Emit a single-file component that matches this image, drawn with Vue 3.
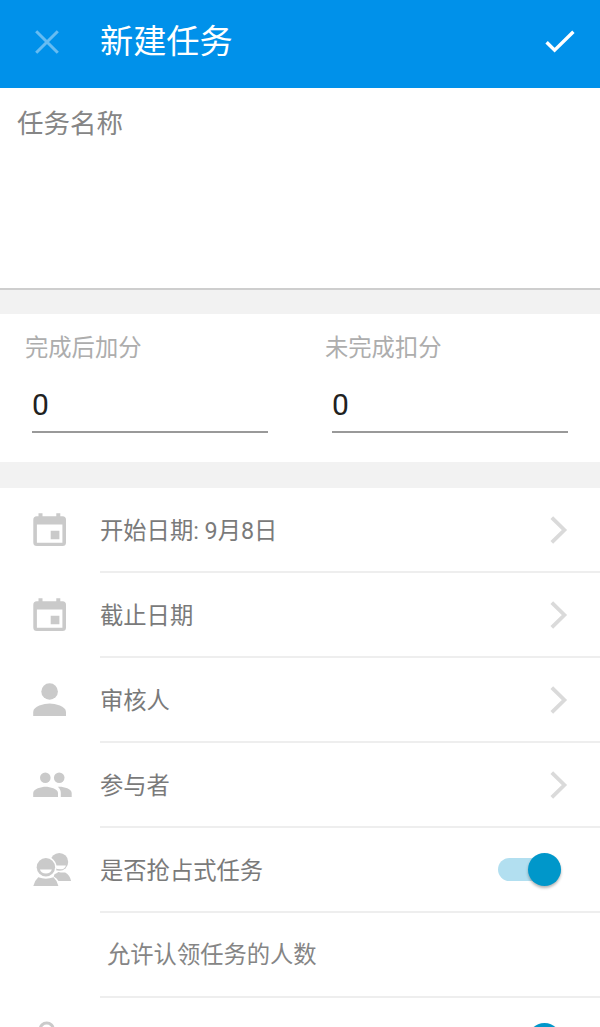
<script setup>
import { ref } from 'vue'

const bonus = ref(0)
const penalty = ref(0)
const grab = ref(true)
const notify = ref(true)

const links = [
  { icon: 'calendar', label: '开始日期: 9月8日' },
  { icon: 'calendar', label: '截止日期' },
  { icon: 'person', label: '审核人' },
  { icon: 'people', label: '参与者' },
]
</script>

<template>
  <div class="page">
    <header class="bar">
      <svg class="bar-close" viewBox="0 0 24 24"><path d="M1.2 1.2 22.8 22.8M22.8 1.2 1.2 22.8" /></svg>
      <h1 class="bar-title">新建任务</h1>
      <svg class="bar-ok" viewBox="0 0 30 24"><path d="M1.6 12.2 9.6 20.2 28.4 1.8" /></svg>
    </header>

    <section class="name">任务名称</section>

    <section class="scores">
      <div class="score">
        <div class="score-label">完成后加分</div>
        <div class="score-value">{{ bonus }}</div>
      </div>
      <div class="score">
        <div class="score-label">未完成扣分</div>
        <div class="score-value">{{ penalty }}</div>
      </div>
    </section>

    <section class="list">
      <div v-for="item in links" :key="item.label" class="row">
        <svg class="row-icon" viewBox="0 0 40 34">
          <path
            v-if="item.icon === 'calendar'"
            fill-rule="evenodd"
            d="M5.5 0.3h4v3h13.800v-3h4v3h2.200a3.500 3.500 0 0 1 3.500 3.500v22.700a3.500 3.500 0 0 1-3.500 3.500h-25.700a3.500 3.500 0 0 1-3.500-3.500v-22.700a3.500 3.500 0 0 1 3.500-3.500h1.700zM3.900 11.600v18.200h25.500v-18.200zM17.700 17.800h8.700v8.500h-8.700z"
          />
          <template v-else-if="item.icon === 'person'">
            <circle cx="16.600" cy="8.500" r="8.300" />
            <path d="M0.200 33v-4.100c0-5.500 10.900-8.300 16.400-8.300s16.400 2.800 16.400 8.300v4.100z" />
          </template>
          <template v-else>
            <circle cx="12.300" cy="9.700" r="5.300" />
            <circle cx="26.200" cy="9.700" r="5.300" />
            <path d="M0.200 29v-4.100c0-4.100 8.200-6.200 12.400-6.200s12.400 2.100 12.400 6.200v4.100z" />
            <path d="M26.500 18.700c4.600 0 12.200 2.200 12.200 6.200v4.100h-10.900v-4.100c0-2.600-1.200-4.600-3-6.100.6-.1 1.200-.1 1.700-.1z" />
          </template>
        </svg>
        <div class="row-body">
          <span class="label">{{ item.label }}</span>
          <svg class="chevron" viewBox="0 0 17 28"><path d="M1.800 1.600 14.400 14 1.800 26.400" /></svg>
        </div>
      </div>

      <div class="row">
        <svg class="row-icon" viewBox="0 0 40 34">
          <circle cx="26.300" cy="8.900" r="8.900" />
          <path class="smile" d="M22 12.400h11q-1.400 3.900-5.500 3.900-3.500 0-5.500-1.500z" />
          <path d="M21.500 21.200q3.200-1.400 3.700-2.200 4 .8 7 .4 4.800 2.600 5.900 8.600h-12.600q-1.500-3-4.800-4.600z" />
          <circle class="gap" cx="12.900" cy="14.200" r="10.700" />
          <circle cx="12.900" cy="14.200" r="9.200" />
          <path class="smile" d="M6.900 16.500h12q-1.300 4-6 4t-6-4z" />
          <path d="M5.300 24.300q7.600 2.900 15.200 0 3.800 3.400 4.900 8.700h-25.100q1.200-5.300 5-8.700z" />
        </svg>
        <div class="row-body">
          <span class="label">是否抢占式任务</span>
          <span class="switch" :class="{ on: grab }" @click="grab = !grab"><i class="knob" /></span>
        </div>
      </div>

      <div class="row row--sub">
        <div class="row-body"><span class="label">允许认领任务的人数</span></div>
      </div>

      <div class="row">
        <svg class="row-icon" viewBox="0 0 40 34">
          <circle class="outline" cx="13.700" cy="6.600" r="6.600" />
          <path d="M1 33q1-14 12.700-14t12.700 14z" />
        </svg>
        <div class="row-body">
          <span class="switch" :class="{ on: notify }" @click="notify = !notify"><i class="knob" /></span>
        </div>
      </div>
    </section>
  </div>
</template>

<style>
body { background: #fff; overflow: hidden; }
</style>

<style scoped>
.page {
  height: 1027px; overflow: hidden; background: #f2f2f2; color: #7a7a7a;
  font: 23.3px/34px Roboto, "Noto Sans CJK SC", sans-serif;
}
.page svg { display: block; flex: none; overflow: visible; }

.bar {
  display: flex; align-items: center; box-sizing: border-box; height: 88px;
  padding: 0 25px 5px 35px; background: #0091ea;
}
.bar-close { width: 24px; height: 24px; fill: none; stroke: #66bcf2; stroke-width: 3; }
.bar-title { flex: 1; margin: 0 0 0 41px; color: #fff; font-size: 33.2px; font-weight: 400; line-height: 48px; }
.bar-ok { width: 30px; height: 24px; fill: none; stroke: #fff; stroke-width: 3.4; }

.name {
  box-sizing: border-box; height: 202px; padding: 17px 17px 0;
  background: #fff; border-bottom: 2px solid #cecece; color: #858585;
  font-size: 26.5px; line-height: 38px;
}

.scores { display: flex; height: 148px; margin: 24px 0 26px; background: #fff; }
.score { flex: 1; padding: 17px 32px 0 25px; }
.score-label { color: #adadad; }
.score-value {
  margin: 20px 0 0 7px; padding-bottom: 6px; border-bottom: 2px solid #999;
  color: #212121; font-size: 30px; line-height: 40px;
}

.list { background: #fff; }
.row { display: flex; height: 85px; padding-left: 33px; }
.row-icon { width: 40px; height: 34px; margin: 25px 27px 0 0; fill: #cacaca; }
.row-icon .outline { fill: none; stroke: #cacaca; stroke-width: 3; }
.row-icon .gap, .row-icon .smile { fill: #fff; }
.row-body {
  flex: 1; display: flex; align-items: center; justify-content: space-between;
  padding-right: 33px; border-bottom: 2px solid #eee;
}
.label { padding-top: 2px; }
.row--sub { padding-left: 100px; }
.row--sub .row-body { padding: 0 0 1px 7px; color: #858585; }
.chevron { width: 17px; height: 28px; fill: none; stroke: #dadada; stroke-width: 3.8; }

.switch {
  display: flex; align-items: center; width: 63px; height: 23px; margin: 0 6px 0 auto;
  border-radius: 12px; background: #ccc;
}
.switch.on { justify-content: flex-end; background: #b2dff0; }
.knob {
  width: 33px; height: 33px; border-radius: 50%;
  background: #f5f5f5; box-shadow: 0 2px 3px rgba(0, 0, 0, 0.3);
}
.on .knob { background: #0097ca; }
</style>
